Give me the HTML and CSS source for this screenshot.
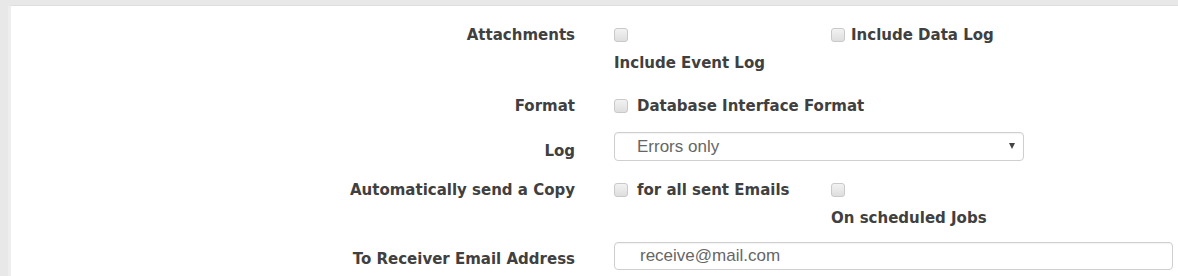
FILE: index.html
```html
<!DOCTYPE html>
<html lang="en">
<head>
<meta charset="UTF-8" />
<meta name="viewport" content="width=device-width, initial-scale=1.0"/>
<title>Email Settings</title>
<link rel="stylesheet" href="styles.css">
</head>
<body>
<div class="page">
  <div class="panel">
    <form class="form">

      <div class="form-row row-attach">
        <div class="control-label">Attachments</div>
        <div class="cols">
          <div class="col">
            <div class="check"><input type="checkbox" class="box" /></div>
            <div class="check-text below">Include Event Log</div>
          </div>
          <div class="col">
            <label class="check tight"><input type="checkbox" class="box" /><span class="check-text">Include Data Log</span></label>
          </div>
        </div>
      </div>

      <div class="form-row row-format">
        <div class="control-label">Format</div>
        <div>
          <label class="check"><input type="checkbox" class="box" /><span class="check-text">Database Interface Format</span></label>
        </div>
      </div>

      <div class="form-row row-log">
        <div class="control-label pad-select">Log</div>
        <div>
          <div class="select-wrap">
            <select class="form-control">
              <option selected>Errors only</option>
              <option>All</option>
              <option>None</option>
            </select>
          </div>
        </div>
      </div>

      <div class="form-row row-copy">
        <div class="control-label">Automatically send a Copy</div>
        <div class="cols">
          <div class="col">
            <label class="check"><input type="checkbox" class="box" /><span class="check-text">for all sent Emails</span></label>
          </div>
          <div class="col">
            <div class="check"><input type="checkbox" class="box" /></div>
            <div class="check-text below2">On scheduled Jobs</div>
          </div>
        </div>
      </div>

      <div class="form-row row-receiver">
        <div class="control-label pad-input">To Receiver Email Address</div>
        <div>
          <input type="text" class="form-control text-input" value="receive@mail.com" />
        </div>
      </div>

    </form>
  </div>
</div>
</body>
</html>
```

FILE: styles.css
```css
body {
  margin: 0;
  background: #e8e8e8;
  font-family: "DejaVu Sans", Verdana, sans-serif;
  overflow: hidden;
}
.page {
  padding: 5px 0 0 8px;
  height: 276px;
  box-sizing: border-box;
}
.panel {
  background: #fff;
  border-top: 1px solid #dedede;
  border-left: 3px solid #eeeeee;
  height: 100%;
}
.form {
  margin: 0;
  padding-top: 19px;
}
.form-row {
  display: grid;
  grid-template-columns: 564px 1fr;
  column-gap: 39px;
  align-items: start;
}
.control-label {
  text-align: right;
  font-weight: bold;
  font-size: 15px;
  line-height: 20px;
  color: #404040;
}
.pad-select {
  padding-top: 9px;
}
.pad-input {
  padding-top: 7px;
}
.row-format {
  margin-top: 23px;
}
.row-log {
  margin-top: 16px;
}
.row-copy {
  margin-top: 19px;
}
.row-receiver {
  margin-top: 14px;
}
.cols {
  display: grid;
  grid-template-columns: 217px 217px;
}
.check {
  display: flex;
  align-items: center;
  gap: 9px;
  height: 20px;
}
.check.tight {
  gap: 6px;
}
.check-text {
  font-weight: bold;
  font-size: 15px;
  line-height: 20px;
  color: #404040;
  white-space: nowrap;
}
.below {
  margin-top: 8px;
}
.below2 {
  margin-top: 8px;
}
.box {
  appearance: none;
  -webkit-appearance: none;
  margin: 0;
  width: 14px;
  height: 14px;
  border: 1px solid #c9c9c9;
  border-radius: 3px;
  background: linear-gradient(#f2f2f2, #dedede);
  box-sizing: border-box;
  flex: none;
}
.form-control {
  display: block;
  box-sizing: border-box;
  border: 1px solid #cfcfcf;
  border-radius: 4px;
  background: #fff;
  box-shadow: inset 0 1px 1px rgba(0,0,0,.05);
  font-family: "Liberation Sans", Arial, sans-serif;
  font-size: 17px;
  color: #666;
  outline: none;
}
.select-wrap {
  position: relative;
  width: 410px;
}
.select-wrap select {
  appearance: none;
  -webkit-appearance: none;
  width: 100%;
  height: 29px;
  padding: 0 0 0 22px;
}
.select-wrap::after {
  content: "";
  position: absolute;
  right: 9px;
  top: 11px;
  border-left: 3.5px solid transparent;
  border-right: 3.5px solid transparent;
  border-top: 6px solid #444;
}
.text-input {
  width: 559px;
  height: 28px;
  padding: 0 0 0 25px;
}
```
